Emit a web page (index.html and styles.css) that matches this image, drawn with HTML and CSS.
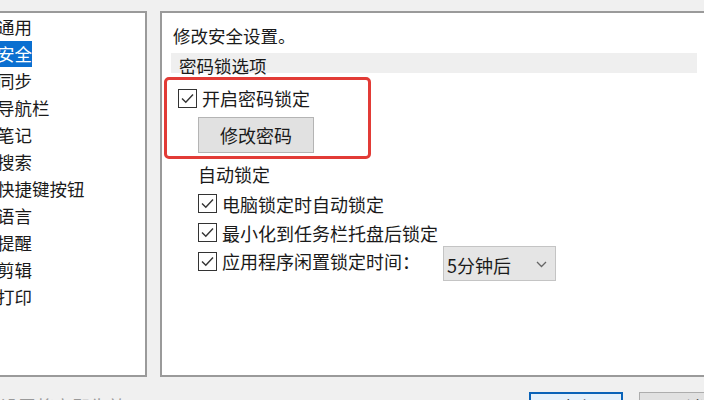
FILE: index.html
```html
<!DOCTYPE html>
<html lang="zh-CN">
<head>
<meta charset="utf-8">
<title>安全设置</title>
<link rel="stylesheet" href="styles.css">
</head>
<body>
<div class="app">
  <div class="panels">
    <div class="nav">
      <div class="nav-item">通用</div>
      <div class="nav-item"><span class="selected">安全</span></div>
      <div class="nav-item">同步</div>
      <div class="nav-item">导航栏</div>
      <div class="nav-item">笔记</div>
      <div class="nav-item">搜索</div>
      <div class="nav-item">快捷键按钮</div>
      <div class="nav-item">语言</div>
      <div class="nav-item">提醒</div>
      <div class="nav-item">剪辑</div>
      <div class="nav-item">打印</div>
    </div>
    <div class="content">
      <div class="title">修改安全设置。</div>
      <div class="band">密码锁选项</div>
      <div class="row row-lock">
        <span class="cb"><svg width="19" height="19" viewBox="0 0 19 19"><path d="M4 9.5 L7.8 13.2 L15 5.5" fill="none" stroke="#333" stroke-width="1.4"/></svg></span>
        <span>开启密码锁定</span>
      </div>
      <div class="btn-change">修改密码</div>
      <div class="subhead">自动锁定</div>
      <div class="rows">
        <div class="row">
          <span class="cb"><svg width="19" height="19" viewBox="0 0 19 19"><path d="M4 9.5 L7.8 13.2 L15 5.5" fill="none" stroke="#333" stroke-width="1.4"/></svg></span>
          <span>电脑锁定时自动锁定</span>
        </div>
        <div class="row">
          <span class="cb"><svg width="19" height="19" viewBox="0 0 19 19"><path d="M4 9.5 L7.8 13.2 L15 5.5" fill="none" stroke="#333" stroke-width="1.4"/></svg></span>
          <span>最小化到任务栏托盘后锁定</span>
        </div>
        <div class="row row-idle">
          <span class="cb"><svg width="19" height="19" viewBox="0 0 19 19"><path d="M4 9.5 L7.8 13.2 L15 5.5" fill="none" stroke="#333" stroke-width="1.4"/></svg></span>
          <span class="label">应用程序闲置锁定时间：</span>
          <div class="select">
            <span>5分钟后</span>
            <svg width="11" height="7" viewBox="0 0 11 7"><path d="M1 1 L5.5 5.5 L10 1" fill="none" stroke="#666" stroke-width="1.3"/></svg>
          </div>
        </div>
      </div>
      <div class="highlight"></div>
    </div>
  </div>
  <div class="footer">
    <span class="hint">设置将立即生效</span>
    <div class="buttons">
      <div class="btn btn-primary">确定</div>
      <div class="btn">取消</div>
    </div>
  </div>
</div>
</body>
</html>
```
FILE: styles.css
```css
html, body {
  margin: 0;
  padding: 0;
  width: 704px;
  height: 400px;
  overflow: hidden;
  background: #f0f0f0;
}
body {
  font-family: "Noto Sans CJK SC", "Noto Sans", sans-serif;
  color: #1a1a1a;
}
.app {
  width: 780px;
  padding-top: 11px;
}
.panels {
  display: flex;
  gap: 13px;
  height: 366px;
}
.nav {
  width: 147px;
  box-sizing: border-box;
  background: #fff;
  border: 2px solid #9a9a9a;
  border-left: none;
  overflow: hidden;
}
.nav-item {
  font-size: 17.5px;
  line-height: 27px;
  height: 27px;
  margin-left: -3px;
  white-space: nowrap;
}
.selected {
  display: inline-block;
  background: #0a6fd0;
  color: #fff;
  line-height: 26px;
}
.content {
  position: relative;
  width: 600px;
  box-sizing: border-box;
  background: #fff;
  border: 2px solid #9a9a9a;
  border-right: none;
  padding: 11px 0 0 9px;
  font-size: 18px;
}
.title {
  line-height: 24px;
  height: 24px;
  font-size: 17.5px;
  padding-left: 2px;
}
.band {
  margin-top: 5px;
  width: 526px;
  height: 20px;
  line-height: 26px;
  background: #efefef;
  padding-left: 8px;
  box-sizing: border-box;
  font-size: 17.5px;
}
.row {
  display: flex;
  align-items: center;
  gap: 5px;
  line-height: 24px;
  white-space: nowrap;
}
.row-lock {
  margin-top: 13px;
  height: 24px;
  padding-left: 7px;
}
.cb {
  width: 19px;
  height: 19px;
  box-sizing: border-box;
  border: 1.5px solid #333;
  background: #fff;
  display: flex;
  align-items: center;
  justify-content: center;
  flex: none;
}
.cb svg {
  display: block;
  margin: -1.5px;
}
.btn-change {
  margin: 7px 0 0 27px;
  width: 116px;
  height: 36px;
  box-sizing: border-box;
  background: #e1e1e1;
  border: 1px solid #b4b4b4;
  display: flex;
  align-items: center;
  justify-content: center;
}
.subhead {
  margin: 9px 0 0 27px;
  line-height: 24px;
  height: 24px;
}
.rows {
  margin: 3px 0 0 27px;
}
.rows .row {
  height: 29px;
}
.row-idle {
  align-items: flex-start;
}
.row-idle .cb {
  margin-top: 5px;
}
.row-idle .label {
  width: 216px;
  line-height: 28px;
}
.select {
  margin-top: -1px;
  width: 113px;
  height: 35px;
  box-sizing: border-box;
  background: #e5e5e5;
  border: 1px solid #c4c4c4;
  display: flex;
  align-items: center;
  justify-content: space-between;
  padding: 2px 8px 0 3px;
}
.select svg {
  display: block;
}
.highlight {
  position: absolute;
  left: 2px;
  top: 64px;
  width: 207px;
  height: 82px;
  box-sizing: border-box;
  border: 3px solid #e23b36;
  border-radius: 5px;
}
.footer {
  display: flex;
  align-items: flex-start;
}
.hint {
  margin-top: 17px;
  font-size: 18px;
  line-height: 24px;
  color: #999;
  width: 529px;
}
.buttons {
  display: flex;
  gap: 16px;
  margin-top: 15px;
}
.btn {
  width: 94px;
  height: 30px;
  box-sizing: border-box;
  background: #e1e1e1;
  border: 1px solid #adadad;
  font-size: 18px;
  display: flex;
  align-items: center;
  justify-content: center;
}
.btn-primary {
  background: #e5f1fb;
  border: 2px solid #0a63b8;
}
```
